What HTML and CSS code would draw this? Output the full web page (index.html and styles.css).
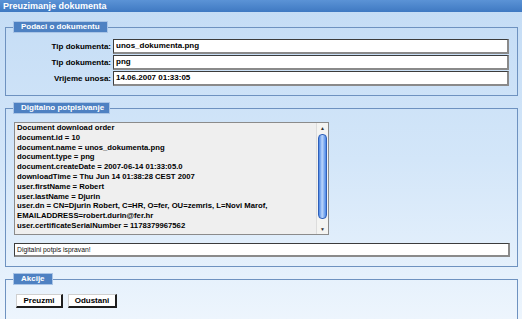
FILE: index.html
```html
<!DOCTYPE html>
<html lang="hr">
<head>
    <meta charset="UTF-8">
    <title>Preuzimanje dokumenta</title>
    <link rel="stylesheet" href="styles.css">
</head>
<body>
<!--    naslov-->
<div class="titlebar">Preuzimanje dokumenta</div>
<div class="content">
    <!--    podaci o dokumentu-->
    <fieldset class="panel panel1">
        <legend>Podaci o dokumentu</legend>
        <div class="rows">
            <label>Tip dokumenta:</label>
            <div class="field">unos_dokumenta.png</div>
            <label>Tip dokumenta:</label>
            <div class="field">png</div>
            <label>Vrijeme unosa:</label>
            <div class="field">14.06.2007 01:33:05</div>
        </div>
    </fieldset>
    <!--    digitalno potpisivanje-->
    <fieldset class="panel panel2">
        <legend>Digitalno potpisivanje</legend>
        <div class="memo">
            <div class="memoText">
                Document download order<br>
                document.id = 10<br>
                document.name = unos_dokumenta.png<br>
                document.type = png<br>
                document.createDate = 2007-06-14 01:33:05.0<br>
                downloadTime = Thu Jun 14 01:38:28 CEST 2007<br>
                user.firstName = Robert<br>
                user.lastName = Djurin<br>
                user.dn = CN=Djurin Robert, C=HR, O=fer, OU=zemris, L=Novi Marof,<br>
                EMAILADDRESS=robert.durin@fer.hr<br>
                user.certificateSerialNumber = 1178379967562
            </div>
            <div class="scroll">
                <div class="arrow">&#9650;</div>
                <div class="track"><div class="thumb"></div></div>
                <div class="arrow">&#9660;</div>
            </div>
        </div>
        <div class="status">Digitalni potpis ispravan!</div>
    </fieldset>
    <!--    akcije-->
    <fieldset class="panel panel3">
        <legend>Akcije</legend>
        <div class="btns">
            <button class="btn btnWide">Preuzmi</button>
            <button class="btn">Odustani</button>
        </div>
    </fieldset>
</div>
</body>
</html>
```

FILE: styles.css
```css
body{
    margin: 0;
    width: 522px;
    height: 319px;
    overflow: hidden;
    font-family: "Liberation Sans", Arial, sans-serif;
    background: linear-gradient(#c4dcf5, #d3e6f9 50%, #edf5fd);
}
/*    naslov*/
.titlebar{
    height: 12px;
    line-height: 12px;
    padding-left: 3px;
    font-size: 9px;
    font-weight: bold;
    color: #fff;
    background: linear-gradient(#5b93d6, #3f79c2);
}
.content{
    padding: 0 4px 0 5px;
}
/*    okviri*/
.panel{
    margin: 6px 0 0;
    padding: 0;
    border: 1px solid #6e92c0;
    min-width: 0;
}
.panel1{
    margin-top: 9px;
}
.panel legend{
    margin-left: 7px;
    padding: 0 6px 0 7px;
    height: 10px;
    line-height: 10px;
    font-size: 8px;
    font-weight: bold;
    color: #fff;
    white-space: nowrap;
    overflow: hidden;
    background: #4e81c2;
    border: 1px solid #a9c4e6;
}
.panel1 legend{
    width: 80px;
}
.panel2 legend{
    width: 82px;
}
.panel3 legend{
    width: 25px;
}
/*    redovi*/
.rows{
    display: grid;
    grid-template-columns: 105px 396px;
    column-gap: 2px;
    row-gap: 1px;
    padding: 6px 0 9px;
}
.rows label{
    text-align: right;
    font-size: 8px;
    font-weight: bold;
    line-height: 15px;
    color: #000;
}
.field{
    height: 12px;
    line-height: 12px;
    padding-left: 2px;
    font-size: 8px;
    font-weight: bold;
    background: #fff;
    border-top: 1px solid #3c3c3c;
    border-left: 1px solid #3c3c3c;
    border-right: 2px solid #8a8a8a;
    border-bottom: 2px solid #8a8a8a;
}
/*    tekst potpisa*/
.memo{
    display: flex;
    width: 313px;
    height: 111px;
    margin: 8px 0 0 8px;
    border: 1px solid #8b8b8b;
    background: #efefef;
}
.memoText{
    flex: 1;
    padding: 0 2px;
    font-size: 7.7px;
    line-height: 9.8px;
    font-weight: bold;
    color: #000;
    white-space: nowrap;
    overflow: hidden;
}
.scroll{
    width: 11px;
    display: flex;
    flex-direction: column;
    background: #f4f4f2;
    border-left: 1px solid #dcdcdc;
}
.arrow{
    height: 10px;
    line-height: 10px;
    font-size: 5px;
    text-align: center;
    color: #333;
}
.track{
    flex: 1;
    padding: 1px 1px 5px;
    display: flex;
}
.thumb{
    flex: 1;
    border: 1px solid #2f5fb8;
    border-radius: 4px;
    background: linear-gradient(90deg, #4b87e6, #bcd6fb 45%, #4b87e6);
}
.status{
    height: 11px;
    line-height: 11px;
    margin: 8px 0 9px 8px;
    width: 491px;
    padding-left: 2px;
    font-size: 6.8px;
    color: #111;
    background: #fff;
    border-top: 1px solid #3c3c3c;
    border-left: 1px solid #3c3c3c;
    border-right: 2px solid #8a8a8a;
    border-bottom: 2px solid #8a8a8a;
}
/*    gumbi*/
.btns{
    display: flex;
    gap: 5px;
    padding: 9px 0 12px 10px;
}
.btn{
    width: 49px;
    height: 14px;
    padding: 0;
    font-family: "Liberation Sans", Arial, sans-serif;
    font-size: 8px;
    font-weight: bold;
    color: #000;
    background: #fff;
    border-top: 1px solid #cfcfcf;
    border-left: 1px solid #cfcfcf;
    border-right: 2px solid #1e1e1e;
    border-bottom: 2px solid #1e1e1e;
}
.btnWide{
    width: 47px;
}
```
